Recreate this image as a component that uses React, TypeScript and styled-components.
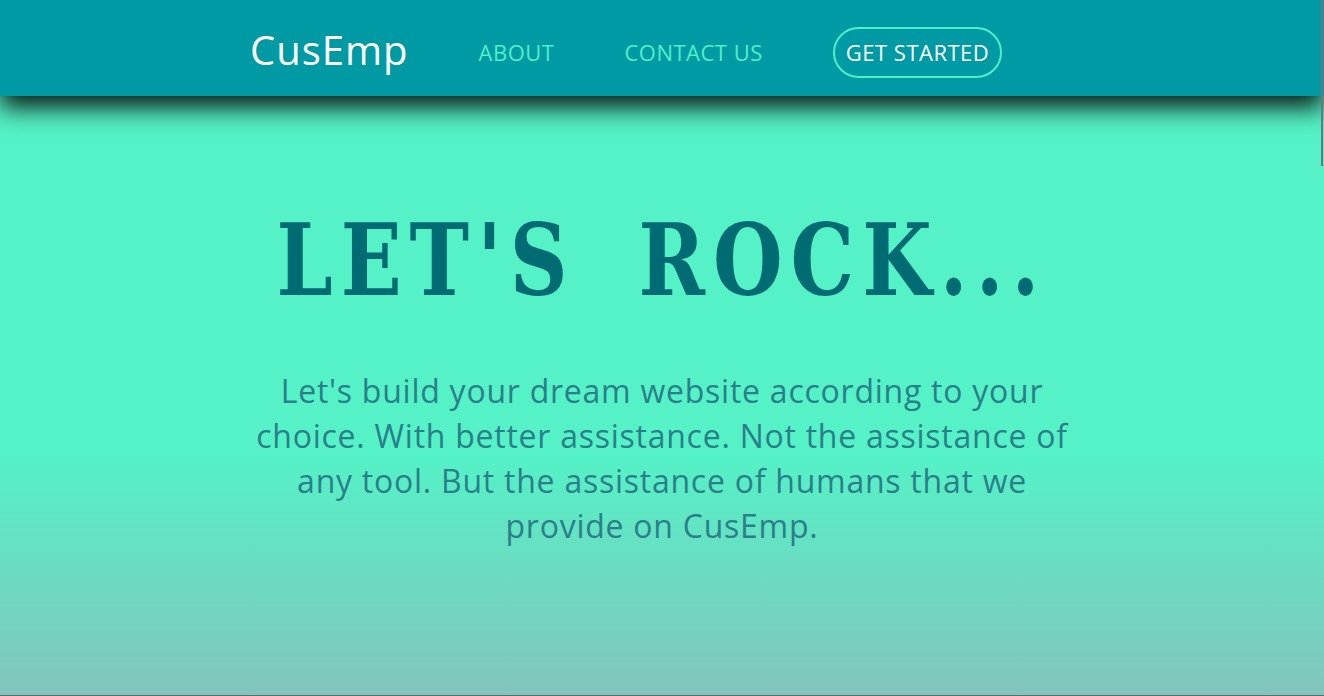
import React from "react";
import styled, { createGlobalStyle } from "styled-components";

const Global = createGlobalStyle`
  html, body { margin: 0; padding: 0; }
  body {
    font-family: "Open Sans", "Noto Sans", sans-serif;
    background: #5f6b6a;
    overflow: hidden;
  }
  * { box-sizing: border-box; }
`;

const Page = styled.div`
  display: flex;
  flex-direction: column;
  min-height: 800px;
`;

const Nav = styled.nav`
  position: relative;
  z-index: 2;
  height: 96px;
  background: #009aa5;
  display: flex;
  align-items: center;
  padding: 8px 0 0 250px;
  gap: 70px;
  box-shadow: 0 11px 24px rgba(0, 0, 0, 0.92);
`;

const Logo = styled.div`
  color: #ffffff;
  font-size: 40px;
  letter-spacing: 1px;
  line-height: 1;
  margin-bottom: 5px;
`;

const NavLink = styled.a`
  color: #52efc4;
  font-size: 22px;
  letter-spacing: 0.5px;
  text-transform: uppercase;
  text-decoration: none;
`;

const CTA = styled.a`
  color: #ffffff;
  font-size: 22px;
  letter-spacing: 0.5px;
  text-transform: uppercase;
  text-decoration: none;
  border: 2px solid #52efc4;
  border-radius: 26px;
  height: 51px;
  padding: 0 11px;
  display: flex;
  align-items: center;
`;

const Hero = styled.section`
  height: 599px;
  background: linear-gradient(to bottom, #54f2c6 0%, #54f2c6 60%, #83c4bd 100%);
  display: flex;
  flex-direction: column;
  align-items: center;
  padding-top: 114px;
`;

const Title = styled.h1`
  margin: 0;
  font-family: "DejaVu Serif", serif;
  font-weight: bold;
  font-size: 100px;
  line-height: 1;
  letter-spacing: 10px;
  word-spacing: 34px;
  color: #006b73;
  white-space: nowrap;
  transform: scaleX(0.8);
`;

const Lead = styled.p`
  margin: 58px 0 0;
  width: 830px;
  text-align: center;
  font-size: 32px;
  letter-spacing: 0.75px;
  line-height: 45px;
  color: #2a7f89;
`;

const Below = styled.div`
  flex: 1;
  background: #5f6b6a;
`;

const ScrollThumb = styled.div`
  position: fixed;
  top: 0;
  right: 1px;
  width: 2px;
  height: 166px;
  background: #6e7580;
  z-index: 5;
`;

export default function App() {
  return (
    <>
      <Global />
      <Page>
        <Nav>
          <Logo>CusEmp</Logo>
          <NavLink href="#">About</NavLink>
          <NavLink href="#">Contact Us</NavLink>
          <CTA href="#">Get Started</CTA>
        </Nav>
        <Hero>
          <Title>LET'S ROCK...</Title>
          <Lead>
            Let's build your dream website according to your choice. With better
            assistance. Not the assistance of any tool. But the assistance of humans
            that we provide on CusEmp.
          </Lead>
        </Hero>
        <Below />
      </Page>
      <ScrollThumb />
    </>
  );
}
